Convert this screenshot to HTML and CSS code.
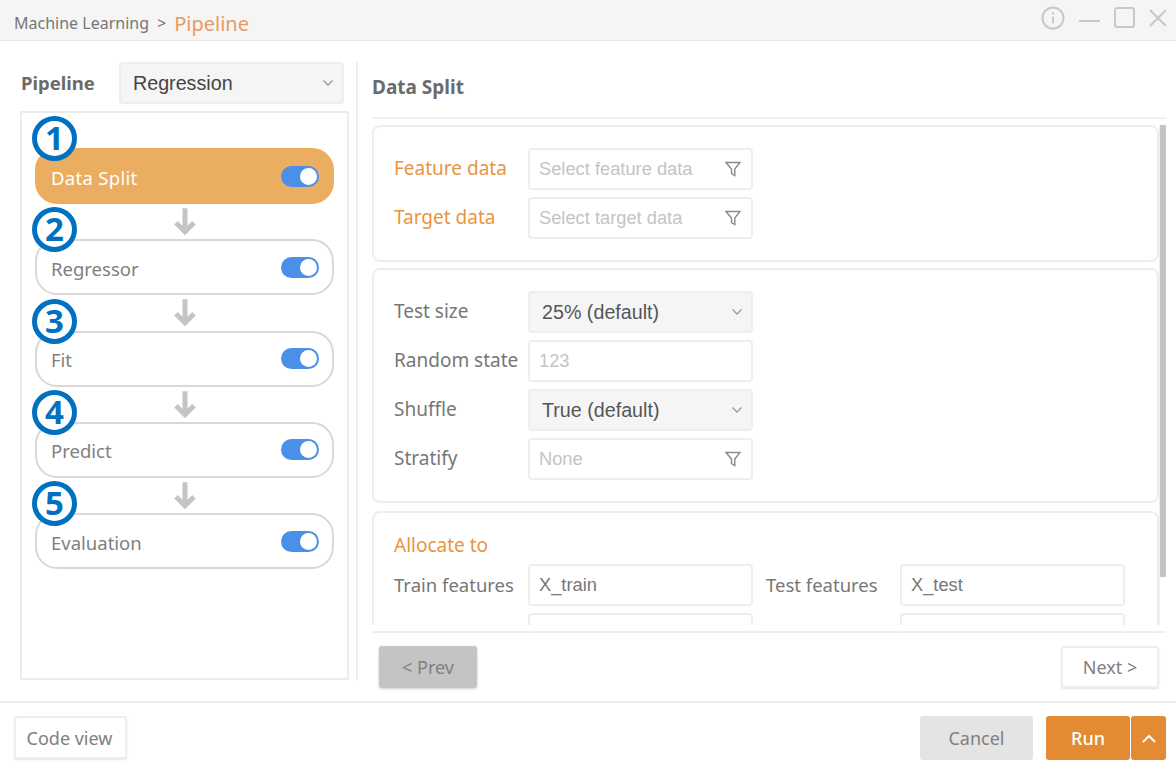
FILE: index.html
```html
<!DOCTYPE html>
<html lang="en">
<head>
    <meta charset="UTF-8">
    <title>Pipeline</title>
    <link rel="stylesheet" href="styles.css">
</head>
<body>
    <header class="titlebar">
        <div class="crumbs">
            <span class="crumb">Machine Learning</span>
            <span class="crumb-sep">&gt;</span>
            <span class="crumb-current">Pipeline</span>
        </div>
        <div class="window-icons">
            <svg width="24" height="24" viewBox="0 0 24 24" fill="none" stroke="#c8c8c8" stroke-width="2"><circle cx="12" cy="12" r="10.5"/><path d="M12 10.5v7"/><path d="M12 6.200v2"/></svg>
            <svg width="21" height="24" viewBox="0 0 21 24" fill="none" stroke="#c8c8c8" stroke-width="2"><path d="M0 15h21"/></svg>
            <svg width="21" height="21" viewBox="0 0 21 21" fill="none" stroke="#c8c8c8" stroke-width="2"><rect x="1" y="1" width="19" height="19" rx="2"/></svg>
            <svg width="18" height="18" viewBox="0 0 18 18" fill="none" stroke="#c8c8c8" stroke-width="2"><path d="M1 1l16 16M17 1L1 17"/></svg>
        </div>
    </header>

    <main class="content">
        <section class="left">
            <div class="pipeline-head">
                <span class="pipeline-label">Pipeline</span>
                <div class="control select wide">
                    <span>Regression</span>
                    <svg class="chev" width="10" height="6" viewBox="0 0 10 6" fill="none" stroke="#999" stroke-width="1.3"><path d="M.5.5L5 5 9.500.5"/></svg>
                </div>
            </div>
            <div class="flow">
                <div class="node active">
                    <span class="badge">1</span>
                    <span>Data Split</span>
                    <span class="toggle"></span>
                </div>
                <svg class="arrow" width="24" height="35" viewBox="0 0 24 35" fill="none" stroke="#c4c4c4" stroke-width="5"><path d="M12 4v25M3 18.500l9 9 9-9"/></svg>
                <div class="node">
                    <span class="badge">2</span>
                    <span>Regressor</span>
                    <span class="toggle"></span>
                </div>
                <svg class="arrow" width="24" height="35" viewBox="0 0 24 35" fill="none" stroke="#c4c4c4" stroke-width="5"><path d="M12 4v25M3 18.500l9 9 9-9"/></svg>
                <div class="node">
                    <span class="badge">3</span>
                    <span>Fit</span>
                    <span class="toggle"></span>
                </div>
                <svg class="arrow" width="24" height="35" viewBox="0 0 24 35" fill="none" stroke="#c4c4c4" stroke-width="5"><path d="M12 4v25M3 18.500l9 9 9-9"/></svg>
                <div class="node">
                    <span class="badge">4</span>
                    <span>Predict</span>
                    <span class="toggle"></span>
                </div>
                <svg class="arrow" width="24" height="35" viewBox="0 0 24 35" fill="none" stroke="#c4c4c4" stroke-width="5"><path d="M12 4v25M3 18.500l9 9 9-9"/></svg>
                <div class="node">
                    <span class="badge">5</span>
                    <span>Evaluation</span>
                    <span class="toggle"></span>
                </div>
            </div>
        </section>

        <section class="right">
            <h2 class="panel-title">Data Split</h2>
            <div class="scroll-wrap">
                <div class="cards">
                    <div class="card card-data">
                        <div class="row">
                            <label class="orange">Feature data</label>
                            <div class="control placeholder">
                                <span>Select feature data</span>
                                <svg class="funnel" width="16" height="16" viewBox="0 0 16 16" fill="none" stroke="#8a8a8a" stroke-width="1.4"><path d="M1 1.500h14L9.800 8v6.500l-3.300-1.800V8z"/></svg>
                            </div>
                        </div>
                        <div class="row">
                            <label class="orange">Target data</label>
                            <div class="control placeholder">
                                <span>Select target data</span>
                                <svg class="funnel" width="16" height="16" viewBox="0 0 16 16" fill="none" stroke="#8a8a8a" stroke-width="1.4"><path d="M1 1.500h14L9.800 8v6.500l-3.300-1.800V8z"/></svg>
                            </div>
                        </div>
                    </div>

                    <div class="card card-opts">
                        <div class="row">
                            <label>Test size</label>
                            <div class="control select">
                                <span>25% (default)</span>
                                <svg class="chev" width="10" height="6" viewBox="0 0 10 6" fill="none" stroke="#999" stroke-width="1.3"><path d="M.5.5L5 5 9.500.5"/></svg>
                            </div>
                        </div>
                        <div class="row">
                            <label>Random state</label>
                            <div class="control placeholder"><span>123</span></div>
                        </div>
                        <div class="row">
                            <label>Shuffle</label>
                            <div class="control select">
                                <span>True (default)</span>
                                <svg class="chev" width="10" height="6" viewBox="0 0 10 6" fill="none" stroke="#999" stroke-width="1.3"><path d="M.5.5L5 5 9.500.5"/></svg>
                            </div>
                        </div>
                        <div class="row">
                            <label>Stratify</label>
                            <div class="control placeholder">
                                <span>None</span>
                                <svg class="funnel" width="16" height="16" viewBox="0 0 16 16" fill="none" stroke="#8a8a8a" stroke-width="1.4"><path d="M1 1.500h14L9.800 8v6.500l-3.300-1.800V8z"/></svg>
                            </div>
                        </div>
                    </div>

                    <div class="card card-alloc">
                        <div class="orange alloc-title">Allocate to</div>
                        <div class="row">
                            <label class="small">Train features</label>
                            <div class="control value"><span>X_train</span></div>
                            <label class="second small">Test features</label>
                            <div class="control value"><span>X_test</span></div>
                        </div>
                        <div class="row">
                            <label></label>
                            <div class="control value"></div>
                            <label class="second"></label>
                            <div class="control value"></div>
                        </div>
                    </div>
                </div>
                <div class="scrollbar"><div class="thumb"></div></div>
            </div>
            <div class="pager">
                <button class="btn prev">&lt; Prev</button>
                <button class="btn next">Next &gt;</button>
            </div>
        </section>
    </main>

    <footer class="footer">
        <button class="btn code">Code view</button>
        <div class="actions">
            <button class="btn cancel">Cancel</button>
            <button class="btn run">Run</button>
            <button class="btn run-more">
                <svg width="14" height="9" viewBox="0 0 14 9" fill="none" stroke="#fff" stroke-width="2"><path d="M1 8l6-6 6 6"/></svg>
            </button>
        </div>
    </footer>
</body>
</html>
```

FILE: styles.css
```css
* {
    box-sizing: border-box;
}

html, body {
    margin: 0;
    padding: 0;
}

body {
    width: 1176px;
    height: 769px;
    overflow: hidden;
    background: #fff;
    color: #777;
    font-family: 'Noto Sans', sans-serif;
    font-size: 19px;
}

/* title bar */
.titlebar {
    height: 41px;
    background: #f5f5f5;
    border-bottom: 1px solid #e6e6e6;
    display: flex;
    justify-content: space-between;
    align-items: center;
    padding: 0 9px 0 14px;
}

.crumbs {
    display: flex;
    align-items: center;
    gap: 8px;
    margin-top: 6px;
}

.crumb, .crumb-sep {
    font-size: 16px;
    color: #777;
}

.crumb-current {
    font-size: 20px;
    color: #ea9a62;
}

.window-icons {
    display: flex;
    align-items: center;
    gap: 14px;
    margin-top: -5px;
}

/* main area */
.content {
    height: 660px;
    display: flex;
}

.left {
    width: 358px;
    margin-top: 21px;
    height: 619px;
    border-right: 2px solid #eee;
    padding: 0 7px 0 20px;
}

.pipeline-head {
    display: flex;
    align-items: center;
    height: 42px;
    margin-bottom: 7px;
}

.pipeline-label {
    width: 99px;
    padding-left: 1px;
    margin-top: -2px;
    font-size: 18.500px;
    font-weight: 700;
    color: #6b6b6b;
}

.flow {
    height: 569px;
    border: 2px solid #ececec;
    padding: 35px 13px 0 13px;
    display: flex;
    flex-direction: column;
    align-items: center;
}

.node {
    position: relative;
    flex: none;
    width: 100%;
    height: 56px;
    border: 2px solid #d8d8d8;
    border-radius: 22px;
    background: #fff;
    display: flex;
    align-items: center;
    justify-content: space-between;
    padding: 2px 13px 0 14px;
    font-size: 18.500px;
    color: #808080;
}

.node.active {
    background: #ebae60;
    border-color: #ebae60;
    color: #fff;
    letter-spacing: 0.3px;
}

.badge {
    position: absolute;
    left: -5px;
    top: -34px;
    width: 45px;
    height: 45px;
    border: 5px solid #0070c0;
    border-radius: 50%;
    background: #fff;
    color: #0070c0;
    font-family: 'Open Sans', sans-serif;
    font-size: 33px;
    font-weight: 700;
    line-height: 33px;
    letter-spacing: 0;
    text-align: center;
}

.toggle {
    width: 38px;
    height: 21px;
    margin-top: -2px;
    border-radius: 11px;
    background: #4a90e8;
    display: flex;
    justify-content: flex-end;
    align-items: center;
    padding-right: 2px;
}

.toggle::after {
    content: '';
    width: 17px;
    height: 17px;
    border-radius: 50%;
    background: #fff;
}

.arrow {
    flex: none;
    height: 35.300px;
}

/* right panel */
.right {
    flex: 1;
    padding: 0 10px 0 14px;
    display: flex;
    flex-direction: column;
}

.panel-title {
    height: 78px;
    margin: 0 0 6px;
    padding: 32px 0 0 0;
    border-bottom: 2px solid #f0f0f0;
    font-size: 19px;
    font-weight: 700;
    line-height: 28px;
    color: #6b6b6b;
}

.scroll-wrap {
    height: 500px;
    margin-bottom: 6px;
    display: flex;
    justify-content: space-between;
    overflow: hidden;
}

.cards {
    width: 787px;
    display: flex;
    flex-direction: column;
    gap: 6px;
}

.card {
    flex: none;
    border: 2px solid #eee;
    border-radius: 8px;
    padding: 0 20px;
}

.card-data {
    height: 137px;
    padding-top: 21px;
}

.card-opts {
    height: 235px;
    padding-top: 21px;
    margin-bottom: 2px;
}

.card-alloc {
    height: 240px;
    padding-top: 15px;
}

.alloc-title {
    height: 36px;
    line-height: 34px;
}

.row {
    display: flex;
    align-items: center;
    height: 42px;
    margin-bottom: 7px;
}

.row label {
    flex: none;
    width: 134px;
    margin-top: -2px;
    white-space: nowrap;
}

.row label.small {
    font-size: 18.500px;
}

.row label.second {
    width: 134px;
    margin-left: 13px;
}

.orange {
    color: #ea943f;
}

.row label.orange {
    color: #ea943f;
}

.control {
    flex: none;
    width: 225px;
    height: 42px;
    border: 2px solid #eee;
    border-radius: 4px;
    background: #fff;
    display: flex;
    align-items: center;
    justify-content: space-between;
    padding: 0 9px;
    font-family: 'Liberation Sans', sans-serif;
    font-size: 18.300px;
}

.control.select {
    background: #f5f5f5;
    color: #555;
    font-size: 19.700px;
    padding: 0 9px 0 12px;
}

.control.wide {
    color: #444;
}

.control.placeholder {
    color: #c4c4c4;
}

.control.value {
    color: #777;
}

.funnel {
    margin-right: 1px;
}

.scrollbar {
    width: 7px;
    background: #fff;
    border-left: 1px solid #eee;
}

.thumb {
    height: 452px;
    background: #c4c4c4;
}

/* pager and footer buttons */
.pager {
    flex: 1;
    border-top: 2px solid #eee;
    display: flex;
    justify-content: space-between;
    align-items: flex-start;
    padding: 13px 7px 0 7px;
}

.btn {
    font-family: 'Noto Sans', sans-serif;
    font-size: 18px;
    color: #808080;
    border: 2px solid #eee;
    border-radius: 3px;
    background: #fff;
    padding: 0;
}

.prev, .next {
    width: 98px;
    height: 42px;
}

.prev {
    background: #c4c4c4;
    border-color: #c4c4c4;
    box-shadow: 0 1px 3px rgba(0, 0, 0, 0.2);
}

.next {
    box-shadow: 0 1px 2px rgba(0, 0, 0, 0.12);
}

.footer {
    height: 68px;
    border-top: 2px solid #eee;
    display: flex;
    justify-content: space-between;
    padding: 13px 10px 0 14px;
}

.code {
    width: 113px;
    height: 43px;
    padding-right: 2px;
    box-shadow: 0 1px 2px rgba(0, 0, 0, 0.1);
}

.actions {
    display: flex;
    align-items: flex-start;
}

.cancel {
    width: 113px;
    height: 44px;
    margin-right: 13px;
    background: #e4e4e4;
    border-color: #e4e4e4;
}

.run, .run-more {
    height: 44px;
    background: #e38a33;
    border: none;
    color: #fff;
}

.run {
    width: 84px;
    margin-right: 1px;
    font-weight: 500;
}

.run-more {
    width: 35px;
    display: flex;
    align-items: center;
    justify-content: center;
}
```
